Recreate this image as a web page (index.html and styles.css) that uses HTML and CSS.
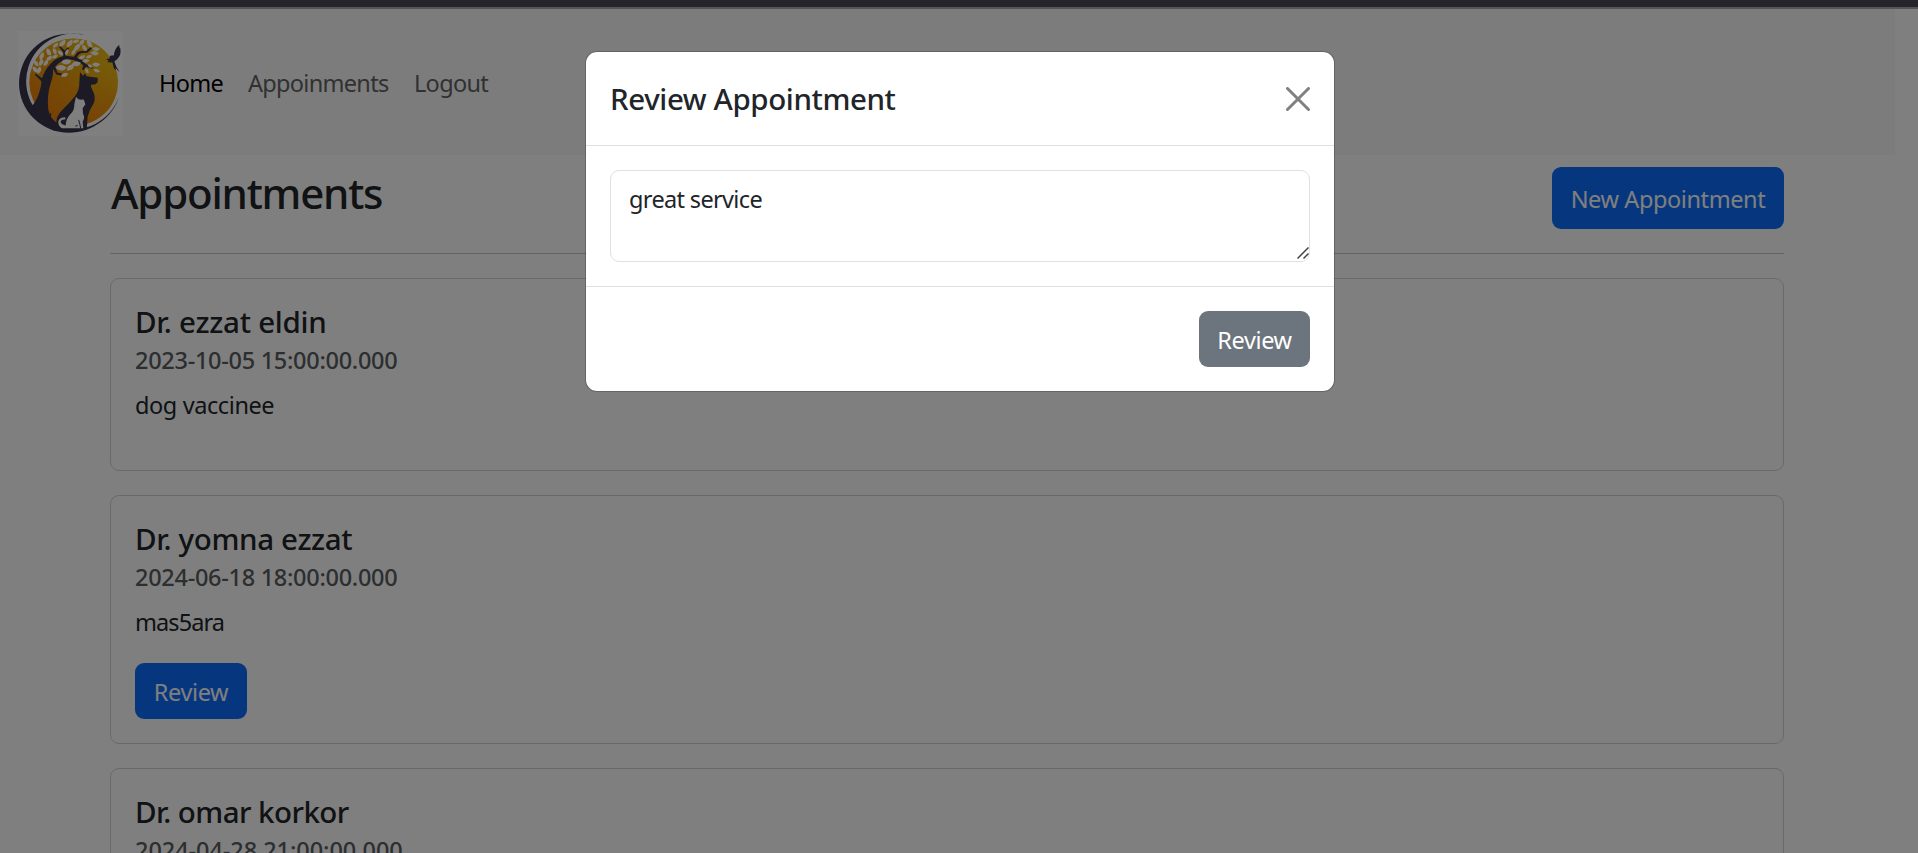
FILE: index.html
```html
<!DOCTYPE html>
<html lang="en">
<head>
<meta charset="utf-8">
<title>Appointments</title>
<link rel="stylesheet" href="styles.css">
</head>
<body>
<div class="strip"></div>
<nav class="navbar">
  <svg class="logo" viewBox="54 94 315 314">
    <defs>
      <linearGradient id="sun" x1="0" y1="0.75" x2="1" y2="0.3">
        <stop offset="0" stop-color="#f07c08"/><stop offset="0.45" stop-color="#ee9a0c"/><stop offset="1" stop-color="#f0cc16"/>
      </linearGradient>
      <linearGradient id="glow" x1="0.2" y1="0" x2="0.65" y2="1">
        <stop offset="0" stop-color="#e8c018" stop-opacity="0.8"/><stop offset="0.5" stop-color="#e09010" stop-opacity="0.3"/><stop offset="1" stop-color="#f07008" stop-opacity="0.9"/>
      </linearGradient>
      <path id="leaf" d="M-14 0Q-5 -14 14 -3Q5 14 -14 0Z"/>
    </defs>
    <rect x="54" y="94" width="315" height="314" fill="#fff"/>
    <ellipse cx="221" cy="247" rx="133" ry="131" fill="url(#sun)"/>
    <ellipse cx="221" cy="247" rx="133" ry="131" fill="url(#glow)" opacity="0.6"/>
    <g fill="#38344a">
      <path d="M265 108C242 101 222 101 207 102A150 148.5 0 0 0 207 399C276 398 340 352 357 290A143 143 0 1 1 265 108Z"/>
      <path d="M96 318Q113 300 122 262Q126 245 122 242L104 224L108 222L126 235Q136 208 152 192Q166 174 188 170L190 158L176 140L180 138L194 152L204 142L207 145L197 158L197 168L222 171L232 157Q240 152 256 154L272 142L276 146L262 159Q244 158 237 163L230 173Q247 179 256 192L278 202L277 207L258 201L250 211L246 208L250 197Q235 183 211 179Q190 180 175 191L166 200L172 218L188 222L187 228L169 224L159 207Q161 225 152 250Q140 286 145 330Q151 360 175 371L205 388L160 392Q115 366 96 318Z"/>
      <path d="M144 352Q153 346 150 338L154 342Q153 354 149 361Z"/>
      <path d="M169 371Q168 349 186 331Q209 309 225 289Q239 270 238 248L240 217L249 228L255 220L260 229L293 234L293 246Q289 256 273 255Q271 262 278 272Q288 289 282 309Q268 331 263 350L260 390L180 390Z"/>
      <path d="M318 178L328 176L330 168L342 166Q342 151 355 137L358 136L358 142L361 145Q364 163 355 174Q351 181 343 184L349 201L359 217L353 211L346 204L348 211L342 206L337 187L327 189L330 186L321 188L326 183Z"/>
    </g>
    <g fill="#fffdf0">
      <use href="#leaf" transform="translate(126 169) rotate(-65) scale(.9)"/>
      <use href="#leaf" transform="translate(145 157) rotate(65) scale(.9)"/>
      <use href="#leaf" transform="translate(165 154) rotate(-110) scale(.8)"/>
      <use href="#leaf" transform="translate(167 137) rotate(-40) scale(.75)"/>
      <use href="#leaf" transform="translate(188 131) rotate(-45)"/>
      <use href="#leaf" transform="translate(210 132) rotate(-50)"/>
      <use href="#leaf" transform="translate(228 125) rotate(-15) scale(.75)"/>
      <use href="#leaf" transform="translate(246 128) rotate(-55) scale(.85)"/>
      <use href="#leaf" transform="translate(268 133) rotate(55) scale(.95)"/>
      <use href="#leaf" transform="translate(232 143) rotate(-50) scale(.95)"/>
      <use href="#leaf" transform="translate(253 145) rotate(55) scale(.8)"/>
      <use href="#leaf" transform="translate(288 148) rotate(5) scale(.85)"/>
      <use href="#leaf" transform="translate(284 161) rotate(8) scale(.9)"/>
      <use href="#leaf" transform="translate(221 157) rotate(-60) scale(.75)"/>
      <use href="#leaf" transform="translate(201 157) rotate(-65) scale(.7)"/>
      <use href="#leaf" transform="translate(181 160) rotate(45) scale(.8)"/>
      <use href="#leaf" transform="translate(148 176) rotate(-35) scale(.8)"/>
      <use href="#leaf" transform="translate(165 171) rotate(-25) scale(.7)"/>
      <use href="#leaf" transform="translate(108 191) rotate(55) scale(.8)"/>
      <use href="#leaf" transform="translate(124 188) rotate(-70) scale(.85)"/>
      <use href="#leaf" transform="translate(138 190) rotate(-55) scale(.8)"/>
      <use href="#leaf" transform="translate(105 210) rotate(50) scale(.85)"/>
      <use href="#leaf" transform="translate(118 211) rotate(-70) scale(.85)"/>
      <use href="#leaf" transform="translate(199 187) rotate(-5) scale(1.1)"/>
      <use href="#leaf" transform="translate(229 193) rotate(-5)"/>
      <use href="#leaf" transform="translate(183 205) rotate(5) scale(1.2)"/>
      <use href="#leaf" transform="translate(212 204) rotate(-35)"/>
      <use href="#leaf" transform="translate(194 226) rotate(-15) scale(.8)"/>
      <use href="#leaf" transform="translate(246 173) rotate(-25) scale(.8)"/>
      <use href="#leaf" transform="translate(267 171) rotate(-20) scale(.7)"/>
      <use href="#leaf" transform="translate(258 184) rotate(-5) scale(.8)"/>
      <use href="#leaf" transform="translate(288 195) rotate(5) scale(.9)"/>
      <use href="#leaf" transform="translate(270 199) rotate(30) scale(.6)"/>
      <use href="#leaf" transform="translate(260 213) rotate(60) scale(.65)"/>
      <use href="#leaf" transform="translate(290 213) rotate(20) scale(.75)"/>
    </g>
    <path fill="#fff" d="M228 291L235 298L244 300L250 298L254 306L256 314L248 325L249 342Q256 355 248 365L250 385L186 385Q173 378 175 364Q179 352 195 352L197 358Q183 358 182 366Q182 374 197 377Q198 355 211 343Q224 331 223 313Z"/>
    <path fill="none" stroke="#38344a" stroke-width="3" d="M236 360L240 375L242 386M233 377L226 379"/>
  </svg>
  <div class="links">
    <a class="link active">Home</a>
    <a class="link link-appointments">Appoinments</a>
    <a class="link link-logout">Logout</a>
  </div>
</nav>
<main class="container">
  <header class="page-head">
    <h1 class="page-title">Appointments</h1>
    <button class="btn btn-new">New Appointment</button>
  </header>
  <section class="cards">
    <article class="card">
      <h2 class="card-title name-first">Dr. ezzat eldin</h2>
      <h3 class="card-date">2023-10-05 15:00:00.000</h3>
      <p class="card-text">dog vaccinee</p>
    </article>
    <article class="card">
      <h2 class="card-title">Dr. yomna ezzat</h2>
      <h3 class="card-date">2024-06-18 18:00:00.000</h3>
      <p class="card-text text-tight">mas5ara</p>
      <button class="btn btn-review">Review</button>
    </article>
    <article class="card card-last">
      <h2 class="card-title name-last">Dr. omar korkor</h2>
      <h3 class="card-date date-last">2024-04-28 21:00:00.000</h3>
    </article>
  </section>
</main>
<div class="backdrop">
  <div class="modal">
    <div class="modal-header">
      <h2 class="modal-title">Review Appointment</h2>
      <svg class="close" viewBox="0 0 24 24"><path d="M1.5 1.5L22.5 22.5M22.5 1.5L1.5 22.5"/></svg>
    </div>
    <div class="modal-body">
      <div class="field">
        <textarea class="textarea">great service</textarea>
        <svg class="grip" viewBox="0 0 12 12"><path d="M0.5 11.5L11.5 0.5M6.5 11.5L11.5 6.5"/></svg>
      </div>
    </div>
    <div class="modal-footer">
      <button class="btn btn-secondary">Review</button>
    </div>
  </div>
</div>
</body>
</html>
```
FILE: styles.css
```css
* { box-sizing: border-box; }
html, body { height: 853px; overflow: hidden; }
body {
  margin: 0;
  position: relative;
  background: #fff;
  color: #212529;
  font-family: "Noto Sans", "Open Sans", sans-serif;
  font-size: 23.5px;
  line-height: 36px;
}
h1, h2, h3, p { margin: 0; }
.strip { height: 9px; background: #25242b; border-bottom: 2px solid #555456; position: relative; z-index: 3; }

.navbar { width: 1895px; height: 146px; background: #f8f9fa; display: flex; align-items: center; padding: 3px 18px 0; }
.logo { width: 105px; height: 105px; display: block; }
.links { display: flex; gap: 24px; margin: 0 0 2px 36px; }
.link { color: #626364; white-space: nowrap; width: 65px; letter-spacing: -0.7px; }
.link.active { color: #000; }
.link-appointments { width: 142px; }

.container { width: 1674px; margin: 12px 0 0 110px; }
.page-head { display: flex; justify-content: space-between; align-items: flex-start; height: 87px; border-bottom: 1px solid #c8c9ca; }
.page-title { font-size: 42px; line-height: 50px; font-weight: 500; margin: 1px 0 0 1px; letter-spacing: -1.2px; white-space: nowrap; }
.btn { border: 0; border-radius: 9px; font: inherit; letter-spacing: -0.4px; color: #fff; background: #0d6efd; height: 56px; padding: 1px 0 0; display: block; white-space: nowrap; }
.btn-new { width: 232px; height: 62px; }
.btn-review { width: 112px; margin-top: 23px; }
.cards { display: flex; flex-direction: column; gap: 24px; margin-top: 24px; }
.card { border: 1px solid #d3d3d4; border-radius: 9px; padding: 25px 24px 24px; }
.card:first-child { padding-bottom: 47px; }
.card-last { height: 85px; border-bottom: 0; border-radius: 9px 9px 0 0; padding-bottom: 0; overflow: hidden; }
.card-title { font-size: 29.5px; line-height: 36px; font-weight: 500; letter-spacing: -0.35px; }
.name-first { letter-spacing: -0.25px; }
.name-last { letter-spacing: -0.55px; }
.card-date { font-size: 23.5px; line-height: 29px; font-weight: 500; color: #585c60; letter-spacing: -0.28px; margin: 6px 0 12px; }
.date-last { letter-spacing: -0.05px; }
.card-text { letter-spacing: -0.4px; }
.text-tight { letter-spacing: -0.9px; }

.backdrop { position: absolute; inset: 0; z-index: 2; background: rgba(0, 0, 0, .5); display: flex; justify-content: center; align-items: flex-start; padding: 51px 0 0 2px; }
.modal { width: 750px; height: 341px; background: #fff; background-clip: padding-box; border: 1px solid rgba(0, 0, 0, .2); border-radius: 12px; }
.modal-header { height: 94px; border-bottom: 1px solid #dee2e6; padding: 0 24px; display: flex; align-items: center; justify-content: space-between; }
.modal-title { font-size: 29.5px; line-height: 45px; font-weight: 500; letter-spacing: -0.4px; }
.close { width: 24px; height: 24px; fill: none; stroke: #808080; stroke-width: 3; stroke-linecap: round; }
.modal-body { padding: 24px; }
.field { position: relative; height: 92px; }
.textarea { display: block; width: 700px; height: 92px; margin: 0; border: 1px solid #dee2e6; border-radius: 9px; padding: 10px 18px; font: inherit; letter-spacing: -0.65px; color: #212529; resize: none; outline: 0; overflow: hidden; background: #fff; }
.grip { position: absolute; right: 1px; bottom: 3px; width: 12px; height: 12px; stroke: #444; stroke-width: 1.5; fill: none; }
.modal-footer { border-top: 1px solid #dee2e6; padding: 24px; display: flex; justify-content: flex-end; }
.btn-secondary { background: #6c757d; width: 111px; }
```
